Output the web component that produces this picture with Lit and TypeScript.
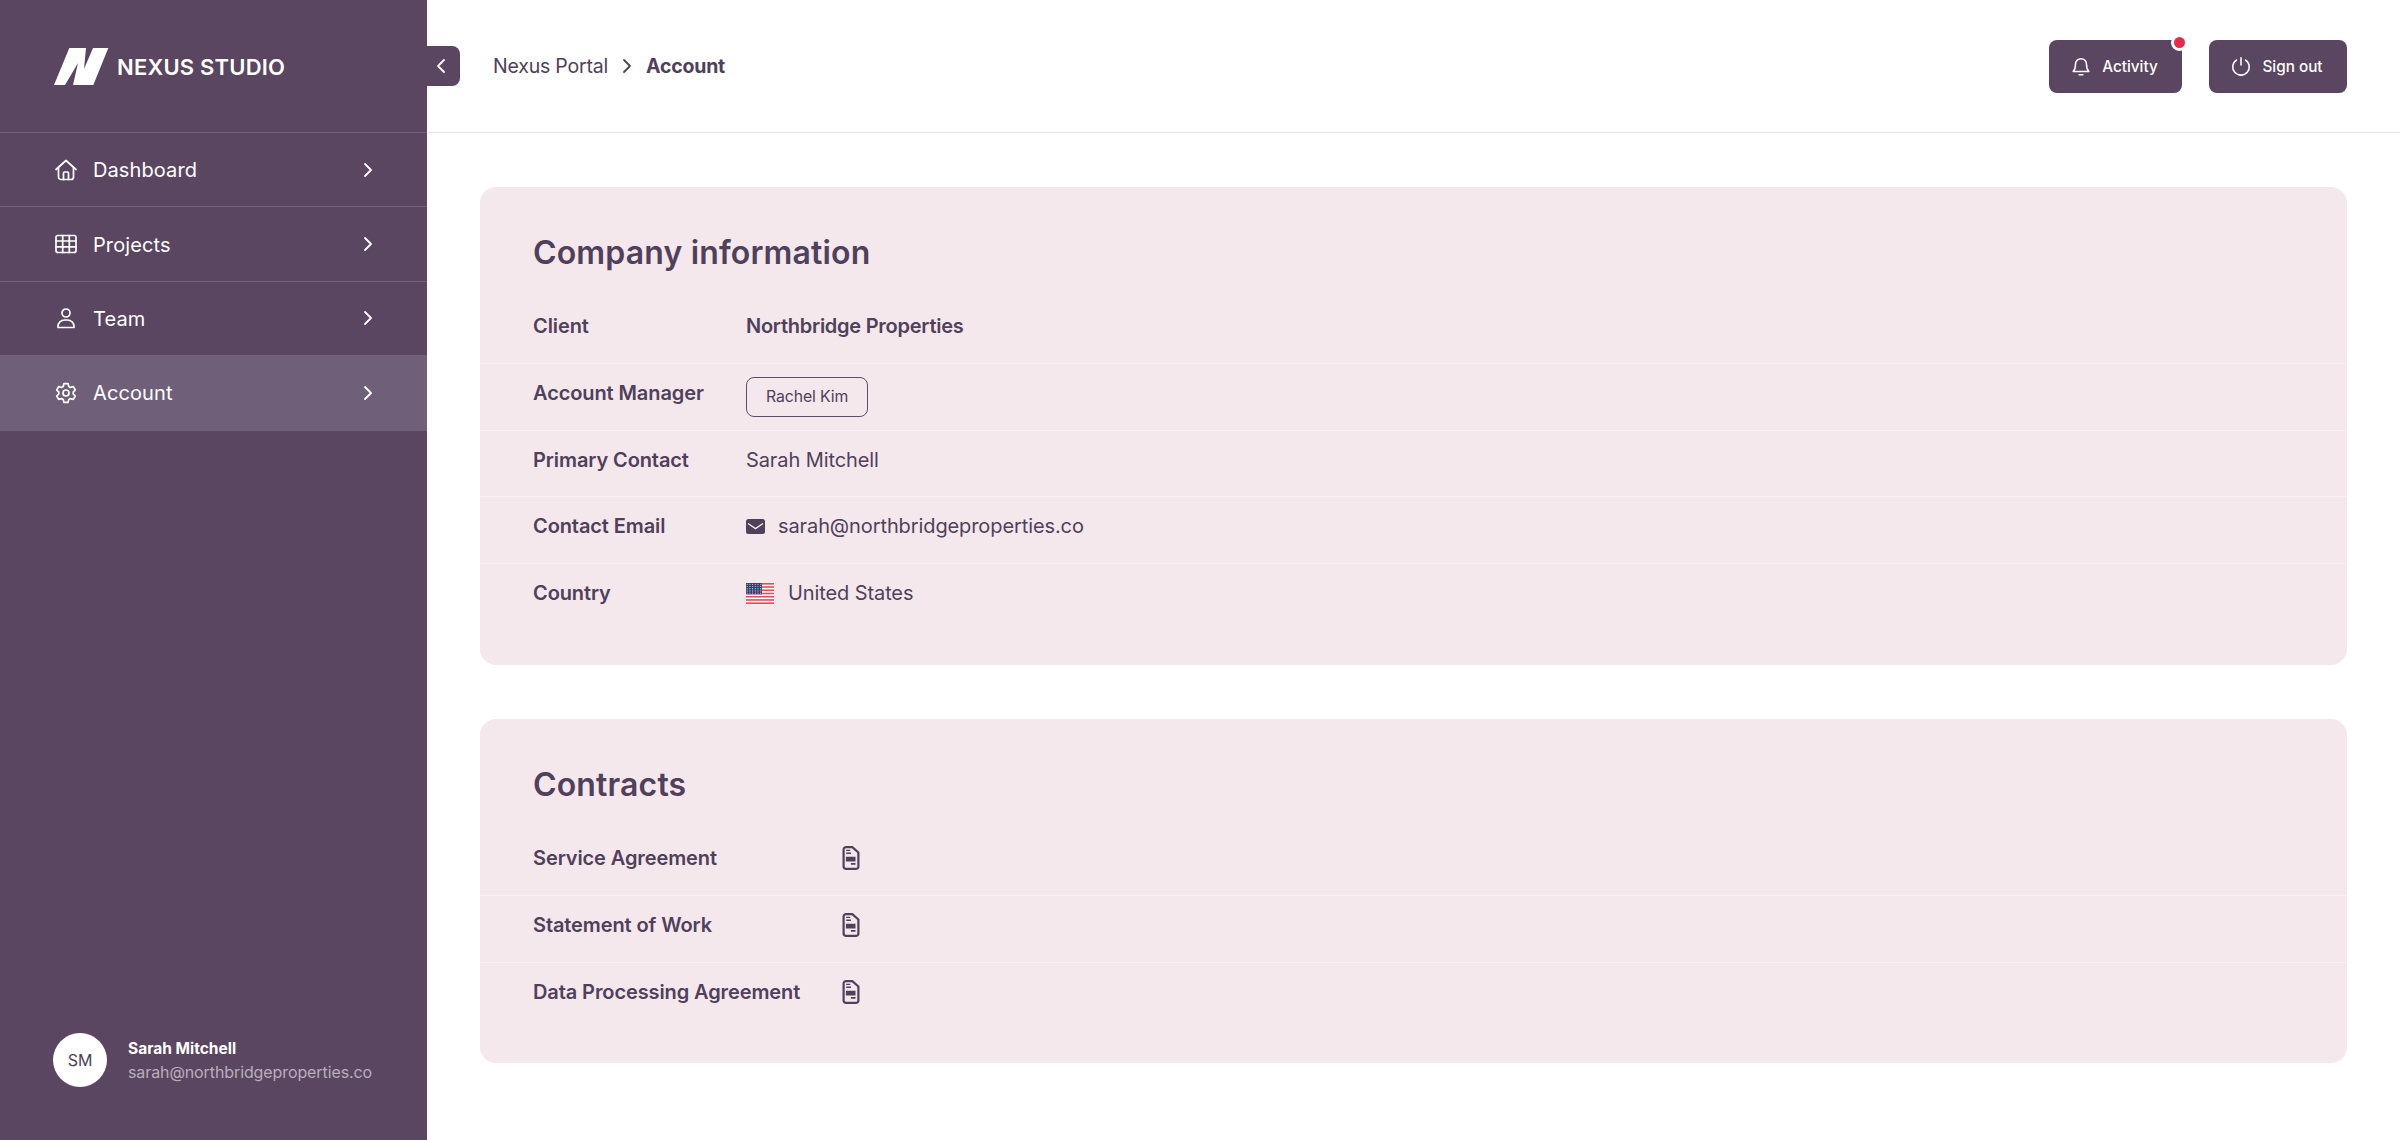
import { LitElement, html, css, svg } from 'lit';
import { customElement } from 'lit/decorators.js';

const chevron = html`<svg class="chev" viewBox="0 0 10 16" fill="none" stroke="currentColor" stroke-width="1.8" stroke-linecap="round" stroke-linejoin="round"><path d="M2 2l6 6-6 6"/></svg>`;

const navIcons = {
  home: svg`<path d="M2 11.5 12 2.5l10 9"/><path d="M4.5 9.5V19a2.5 2.5 0 0 0 2.5 2.5h10a2.5 2.5 0 0 0 2.5-2.5V9.5"/><path d="M9.5 21.5V15a1 1 0 0 1 1-1h3a1 1 0 0 1 1 1v6.5"/>`,
  grid: svg`<rect x="2" y="3.5" width="20" height="17" rx="2"/><path d="M2 9h20M2 14.8h20M8.7 3.500v17M15.3 3.500v17"/>`,
  user: svg`<circle cx="12" cy="7" r="4"/><path d="M4 21.5v-1A6.5 6.5 0 0 1 10.5 14h3a6.5 6.5 0 0 1 6.5 6.5v1z"/>`,
  gear: svg`<circle cx="12" cy="12" r="3"/><path d="M10 2.6h4l.8 2.9 1.6.9 2.9-.8 2 3.4-2.1 2.1v1.8l2.1 2.1-2 3.4-2.9-.8-1.6.9-.8 2.9h-4l-.8-2.9-1.6-.9-2.9.8-2-3.4 2.1-2.1v-1.8L2.700 9l2-3.400 2.900.800 1.600-.900z"/>`,
};

const docIcon = html`<svg class="doc" viewBox="0 0 17 24"><path fill="none" stroke="#50405a" stroke-width="2.200" stroke-linejoin="round" d="M3.600 1.100h6.200l6.100 5.400v13.900a2.500 2.500 0 0 1-2.500 2.500H3.600a2.500 2.500 0 0 1-2.500-2.500V3.600a2.500 2.500 0 0 1 2.500-2.500z"/><path fill="#50405a" d="M3.700 3.800h4v1.300h-4zM3.700 6.600h4.800v1.300H3.700zM3.400 10.800h9.600v4.600H3.400zM8.400 17h4.600v1.800H8.400z"/></svg>`;

const stripes = [0, 1, 2, 3, 4, 5, 6];
const stars: [number, number][] = [];
for (let r = 0; r < 5; r++) for (let c = 0; c < 6; c++) stars.push([1.2 + c * 2.7, 1.3 + r * 2.2]);

const flag = html`<svg class="flag" viewBox="0 0 28 21"><rect width="28" height="21" fill="#fff"/>${stripes.map(i => svg`<rect y=${i * 3.23} width="28" height="1.62" fill="#d8505c"/>`)}<rect width="16" height="11.300" fill="#33406e"/>${stars.map(([x, y]) => svg`<circle cx=${x} cy=${y} r=".6" fill="#cfd4e6"/>`)}</svg>`;

@customElement('nav-item')
export class NavItem extends LitElement {
  static properties = { icon: {}, label: {}, active: { type: Boolean, reflect: true } };
  declare icon: keyof typeof navIcons;
  declare label: string;
  declare active: boolean;

  static styles = css`
    :host {
      display: flex;
      align-items: center;
      height: 74.400px;
      box-sizing: border-box;
      padding: 0 54px 0 54px;
      gap: 15px;
      color: #fff;
      font-size: 20px;
      letter-spacing: 0.1px;
      border-bottom: 1px solid #75637c;
    }
    :host([active]) {
      background: #6f5f78;
      border-bottom-color: #6f5f78;
    }
    .icon {
      width: 24px;
      height: 24px;
      fill: none;
      stroke: currentColor;
      stroke-width: 1.7;
      stroke-linecap: round;
      stroke-linejoin: round;
    }
    .text {
      flex: 1;
      padding-top: 1px;
    }
    .chev {
      width: 10px;
      height: 16px;
    }
  `;

  render() {
    return html`
      <svg class="icon" viewBox="0 0 24 24">${navIcons[this.icon]}</svg>
      <span class="text">${this.label}</span>
      ${chevron}
    `;
  }
}

@customElement('app-root')
export class AppRoot extends LitElement {
  static styles = css`
    :host {
      display: grid;
      grid-template-columns: 427px 1fr;
      height: 1140px;
      font-family: Inter, 'Liberation Sans', sans-serif;
      color: #50405a;
      background: #fff;
    }
    .sidebar {
      display: flex;
      flex-direction: column;
      background: #5a4660;
    }
    .brand {
      display: flex;
      align-items: center;
      gap: 8px;
      height: 133px;
      padding-left: 53px;
      box-sizing: border-box;
      color: #fff;
      font-size: 22px;
      font-weight: 600;
      letter-spacing: 0.2px;
      border-bottom: 1px solid #75637c;
    }
    .brand span {
      padding-top: 1px;
    }
    .logo {
      width: 56px;
      height: 37px;
    }
    nav {
      flex: 1;
    }
    .me {
      display: flex;
      align-items: center;
      gap: 21px;
      padding: 0 0 53px 53px;
    }
    .avatar {
      display: grid;
      place-items: center;
      width: 54px;
      height: 54px;
      border-radius: 50%;
      background: #fff;
      font-size: 16px;
    }
    .me-name {
      color: #fff;
      font-size: 15.500px;
      font-weight: 700;
      line-height: 24px;
    }
    .me-mail {
      color: #b9aebd;
      font-size: 16px;
      line-height: 22px;
      letter-spacing: -0.1px;
    }
    .main {
      position: relative;
      display: flex;
      flex-direction: column;
    }
    .collapse {
      position: absolute;
      left: 0;
      top: 46px;
      display: grid;
      place-items: center;
      width: 33px;
      height: 40px;
      box-sizing: border-box;
      padding-right: 5px;
      color: #fff;
      background: #5a4660;
      border-radius: 0 8px 8px 0;
    }
    .collapse svg {
      width: 10px;
      height: 16px;
    }
    header {
      display: flex;
      align-items: center;
      justify-content: space-between;
      height: 133px;
      padding: 0 53px 0 66px;
      box-sizing: border-box;
      border-bottom: 1px solid #e4e4ea;
    }
    .crumbs {
      display: flex;
      align-items: center;
      gap: 14px;
      font-size: 19.500px;
      letter-spacing: -0.2px;
    }
    .crumbs .chev {
      width: 10px;
      height: 16px;
    }
    .crumbs b {
      font-weight: 700;
    }
    .actions {
      display: flex;
      gap: 27px;
    }
    .btn {
      position: relative;
      display: flex;
      align-items: center;
      justify-content: center;
      gap: 10px;
      height: 53px;
      box-sizing: border-box;
      padding-right: 3px;
      border-radius: 8px;
      color: #fff;
      background: #5a4660;
      font-size: 15.300px;
      font-weight: 500;
    }
    .btn.activity {
      width: 133px;
    }
    .btn.signout {
      width: 138px;
    }
    .btn svg {
      width: 22px;
      height: 22px;
      fill: none;
      stroke: currentColor;
      stroke-width: 1.7;
      stroke-linecap: round;
      stroke-linejoin: round;
    }
    .dot {
      position: absolute;
      right: -6px;
      top: -6px;
      width: 11px;
      height: 11px;
      border: 3px solid #fff;
      border-radius: 50%;
      background: #e22c47;
    }
    .content {
      display: flex;
      flex-direction: column;
      gap: 54px;
      padding: 54px 53px;
    }
    .card {
      padding: 42px 0 34px;
      border-radius: 16px;
      background: #f4e8ed;
    }
    h2 {
      margin: 0 0 20px;
      padding: 0 53px;
      font-size: 32px;
      line-height: 48px;
      font-weight: 600;
      letter-spacing: 0.15px;
    }
    .row {
      display: grid;
      align-items: start;
      height: 66.800px;
      box-sizing: border-box;
      padding: 14px 53px 0;
      font-size: 20px;
      line-height: 30px;
      letter-spacing: -0.1px;
      border-bottom: 1px solid #f9f1f4;
    }
    .row:last-child {
      border-bottom: none;
    }
    .info .row {
      grid-template-columns: 213px 1fr;
    }
    .contracts .row {
      grid-template-columns: 309px 1fr;
    }
    .label {
      font-weight: 600;
      letter-spacing: -0.1px;
    }
    .value {
      display: flex;
      align-items: center;
      min-height: 30px;
    }
    .strong {
      font-weight: 600;
      letter-spacing: -0.25px;
    }
    .pill {
      display: flex;
      align-items: center;
      height: 40px;
      margin-top: -1px;
      padding: 0 19px;
      box-sizing: border-box;
      border: 1.500px solid #5f4d68;
      border-radius: 8px;
      font-size: 15.800px;
    }
    .mail {
      width: 19px;
      height: 15px;
      margin-right: 13px;
    }
    .flag {
      width: 28px;
      height: 21px;
      margin-right: 14px;
    }
    .doc {
      width: 18px;
      height: 24px;
    }
  `;

  render() {
    return html`
      <aside class="sidebar">
        <div class="brand">
          <svg class="logo" viewBox="0 0 56 37"><path fill="#fff" d="M1 37 16.300 0H33L31 21 40 0h15.300L40.300 37H20L25 15 12 37z"/></svg>
          <span>NEXUS STUDIO</span>
        </div>
        <nav>
          <nav-item icon="home" label="Dashboard"></nav-item>
          <nav-item icon="grid" label="Projects"></nav-item>
          <nav-item icon="user" label="Team"></nav-item>
          <nav-item icon="gear" label="Account" active></nav-item>
        </nav>
        <div class="me">
          <div class="avatar">SM</div>
          <div>
            <div class="me-name">Sarah Mitchell</div>
            <div class="me-mail">sarah@northbridgeproperties.co</div>
          </div>
        </div>
      </aside>
      <div class="main">
        <div class="collapse">
          <svg viewBox="0 0 10 16" fill="none" stroke="currentColor" stroke-width="1.8" stroke-linecap="round" stroke-linejoin="round"><path d="M8 2 2 8l6 6"/></svg>
        </div>
        <header>
          <div class="crumbs">
            <span>Nexus Portal</span>
            ${chevron}
            <b>Account</b>
          </div>
          <div class="actions">
            <div class="btn activity">
              <svg viewBox="0 0 24 24"><path d="M6 10a6 6 0 0 1 12 0c0 5 1 6.500 2.500 8h-17C5 16.500 6 15 6 10z"/><path d="M10 21.500h4"/></svg>
              Activity
              <span class="dot"></span>
            </div>
            <div class="btn signout">
              <svg viewBox="0 0 24 24"><path d="M12 3v8"/><path d="M7 5.500a9 9 0 1 0 10 0"/></svg>
              Sign out
            </div>
          </div>
        </header>
        <div class="content">
          <section class="card info">
            <h2>Company information</h2>
            <div class="row"><span class="label">Client</span><span class="value strong">Northbridge Properties</span></div>
            <div class="row"><span class="label">Account Manager</span><span class="value"><span class="pill">Rachel Kim</span></span></div>
            <div class="row"><span class="label">Primary Contact</span><span class="value">Sarah Mitchell</span></div>
            <div class="row">
              <span class="label">Contact Email</span>
              <span class="value">
                <svg class="mail" viewBox="0 0 19 15"><rect width="19" height="15" rx="2.500" fill="#50405a"/><path d="M2 4.500l7.500 5 7.500-5" fill="none" stroke="#f4e8ed" stroke-width="1.500"/></svg>
                sarah@northbridgeproperties.co
              </span>
            </div>
            <div class="row"><span class="label">Country</span><span class="value">${flag}United States</span></div>
          </section>
          <section class="card contracts">
            <h2>Contracts</h2>
            <div class="row"><span class="label">Service Agreement</span><span class="value">${docIcon}</span></div>
            <div class="row"><span class="label">Statement of Work</span><span class="value">${docIcon}</span></div>
            <div class="row"><span class="label">Data Processing Agreement</span><span class="value">${docIcon}</span></div>
          </section>
        </div>
      </div>
    `;
  }
}
